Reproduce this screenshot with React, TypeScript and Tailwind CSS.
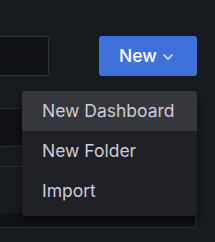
const ITEMS = ["New Dashboard", "New Folder", "Import"];

export default function App() {
  return (
    <div
      className="relative w-[215px] h-[242px] overflow-hidden bg-[#181b1f]"
      style={{ fontFamily: "Inter, 'Noto Sans', sans-serif" }}
    >
      <div className="flex items-center pt-[36px]">
        <div className="w-[49px] h-[40px] bg-[#111217] border border-l-0 border-[#34363c] rounded-r-[3px]" />
        <button className="ml-auto mr-[18px] w-[98px] h-[40px] flex items-center pl-[20px] rounded-[3px] bg-[#3d71d9] text-white text-[17.5px] font-medium leading-none">
          New
          <svg width="10" height="6" viewBox="0 0 10 6" className="ml-[6px] mt-[1px]" fill="none">
            <path d="M1 1L5 5L9 1" stroke="#e6ecfa" strokeWidth="1.5" strokeLinecap="round" strokeLinejoin="round" />
          </svg>
        </button>
      </div>

      {/* list behind the menu */}
      <div className="mt-[32px] w-[196px] border-t border-r border-b border-[#2c2e33] flex flex-col">
        <div className="h-[38px] bg-[#111217] border-b border-[#2c2e33]" />
        <div className="h-[20px] border-b border-[#2c2e33]" />
        <div className="h-[46px]" />
        <div className="h-[14px] bg-[#111217]" />
      </div>

      {/* dropdown menu */}
      <div className="absolute left-[22px] top-[91px] w-[175px] h-[125px] bg-[#1f2126] rounded-[3px] shadow-[0_4px_10px_rgba(0,0,0,0.55)] text-[#ccccdc] text-[17.5px] leading-none">
        {ITEMS.map((label, i) => (
          <div
            key={label}
            className={`h-[40px] flex items-center pl-[20px] ${i === 0 ? "bg-[#35373d] rounded-t-[3px]" : ""}`}
          >
            {label}
          </div>
        ))}
      </div>
    </div>
  );
}
